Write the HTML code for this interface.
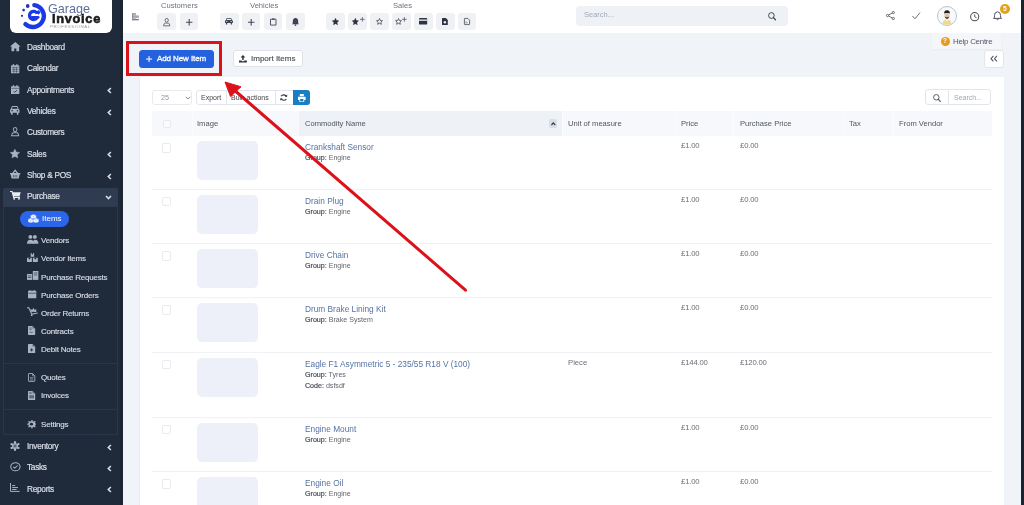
<!DOCTYPE html><html><head><meta charset="utf-8"><style>
*{margin:0;padding:0;box-sizing:border-box}
html,body{width:1024px;height:505px;overflow:hidden;background:#f0f3f8;font-family:"Liberation Sans",sans-serif}
.t{position:absolute;line-height:1;white-space:nowrap;will-change:transform}
.r{position:absolute}
svg{position:absolute;overflow:visible}
</style></head><body>
<div class="r" style="left:0px;top:0px;width:123px;height:505px;background:#1f2a3b"></div>
<div class="r" style="left:120px;top:0px;width:3px;height:505px;background:#1b2534"></div>
<div class="r" style="left:10px;top:-6px;width:102px;height:39.3px;background:#fff;border-radius:6px"></div>
<svg style="left:0;top:0" width="60" height="36" viewBox="0 0 60 36">
<path d="M34.33 5.11 A11.0 11.0 0 1 1 25.44 24.17" fill="none" stroke="#1c3ae4" stroke-width="4.4" stroke-linecap="round"/>
<path d="M37.32 13.67 A4.1 4.1 0 1 0 37.15 17.45" fill="none" stroke="#1c3ae4" stroke-width="3.3" stroke-linecap="butt"/><path d="M37.32 13.67 L39.5 11.2" stroke="#1c3ae4" stroke-width="3.3"/>
<path d="M32 17.2 L38.2 17.2" stroke="#1c3ae4" stroke-width="2.6" stroke-linecap="round"/>
<circle cx="27.7" cy="6.0" r="1.9" fill="#2a34b0"/>
<circle cx="23.6" cy="10.1" r="1.4" fill="#2a34b0"/>
<circle cx="22.0" cy="15.8" r="1.15" fill="#2a34b0"/>
</svg>
<div class="t" style="left:48.2px;top:2.52px;font-size:12.6px;color:#5d6d9c;font-weight:400;">Garage</div>
<div class="t" style="left:51.6px;top:12.50px;font-size:12.8px;color:#1a1a1a;font-weight:700;letter-spacing:0.7px;-webkit-text-stroke:0.6px #1a1a1a">Invoice</div>
<div class="t" style="left:50px;top:24.78px;font-size:4.4px;color:#9a9a9a;font-weight:400;letter-spacing:0.55px">PROFESSIONAL</div>
<div class="t" style="left:26.7px;top:42.92px;font-size:8.3px;color:#d8dde5;font-weight:400;-webkit-text-stroke:0.22px #d8dde5;letter-spacing:-0.3px">Dashboard</div>
<div class="t" style="left:26.7px;top:64.32px;font-size:8.3px;color:#d8dde5;font-weight:400;-webkit-text-stroke:0.22px #d8dde5;letter-spacing:-0.3px">Calendar</div>
<div class="t" style="left:26.7px;top:85.62px;font-size:8.3px;color:#d8dde5;font-weight:400;-webkit-text-stroke:0.22px #d8dde5;letter-spacing:-0.3px">Appointments</div>
<svg style="left:107.3px;top:87.3px" width="5" height="7" viewBox="0 0 5 7"><path d="M3.9 1 L1.3 3.5 L3.9 6" fill="none" stroke="#d8dde5" stroke-width="1.6"/></svg>
<div class="t" style="left:26.7px;top:106.92px;font-size:8.3px;color:#d8dde5;font-weight:400;-webkit-text-stroke:0.22px #d8dde5;letter-spacing:-0.3px">Vehicles</div>
<svg style="left:107.3px;top:108.6px" width="5" height="7" viewBox="0 0 5 7"><path d="M3.9 1 L1.3 3.5 L3.9 6" fill="none" stroke="#d8dde5" stroke-width="1.6"/></svg>
<div class="t" style="left:26.7px;top:128.22px;font-size:8.3px;color:#d8dde5;font-weight:400;-webkit-text-stroke:0.22px #d8dde5;letter-spacing:-0.3px">Customers</div>
<div class="t" style="left:26.7px;top:149.52px;font-size:8.3px;color:#d8dde5;font-weight:400;-webkit-text-stroke:0.22px #d8dde5;letter-spacing:-0.3px">Sales</div>
<svg style="left:107.3px;top:151.2px" width="5" height="7" viewBox="0 0 5 7"><path d="M3.9 1 L1.3 3.5 L3.9 6" fill="none" stroke="#d8dde5" stroke-width="1.6"/></svg>
<div class="t" style="left:26.7px;top:170.82px;font-size:8.3px;color:#d8dde5;font-weight:400;-webkit-text-stroke:0.22px #d8dde5;letter-spacing:-0.3px">Shop &amp; POS</div>
<svg style="left:107.3px;top:172.5px" width="5" height="7" viewBox="0 0 5 7"><path d="M3.9 1 L1.3 3.5 L3.9 6" fill="none" stroke="#d8dde5" stroke-width="1.6"/></svg>
<div class="r" style="left:3.3px;top:187.5px;width:115.2px;height:19.099999999999994px;background:#2e3b50;border-radius:2px 2px 0 0"></div>
<div class="t" style="left:26.7px;top:192.32px;font-size:8.3px;color:#d8dde5;font-weight:400;-webkit-text-stroke:0.22px #d8dde5;letter-spacing:-0.3px">Purchase</div>
<svg style="left:105.3px;top:194.5px" width="7" height="5" viewBox="0 0 7 5"><path d="M1 1 L3.5 3.5 L6 1" fill="none" stroke="#d8dde5" stroke-width="1.6"/></svg>
<div class="r" style="left:3.3px;top:206.4px;width:115.2px;height:229.1px;border:1px solid #2a3548;border-top:none"></div>
<div class="r" style="left:3.3px;top:362.5px;width:115.2px;height:1.0px;background:#2a3548"></div>
<div class="r" style="left:3.3px;top:409px;width:115.2px;height:1px;background:#2a3548"></div>
<div class="r" style="left:19.6px;top:210.9px;width:48.99999999999999px;height:16.099999999999994px;background:#2b66ea;border-radius:8.5px"></div>
<div class="t" style="left:41.9px;top:215.06px;font-size:8px;color:#fff;font-weight:400;">Items</div>
<div class="t" style="left:41px;top:236.96px;font-size:8px;color:#d8dde5;font-weight:400;letter-spacing:-0.2px;-webkit-text-stroke:0.15px #d8dde5">Vendors</div>
<div class="t" style="left:41px;top:255.36px;font-size:8px;color:#d8dde5;font-weight:400;letter-spacing:-0.2px;-webkit-text-stroke:0.15px #d8dde5">Vendor Items</div>
<div class="t" style="left:41px;top:273.66px;font-size:8px;color:#d8dde5;font-weight:400;letter-spacing:-0.2px;-webkit-text-stroke:0.15px #d8dde5">Purchase Requests</div>
<div class="t" style="left:41px;top:291.86px;font-size:8px;color:#d8dde5;font-weight:400;letter-spacing:-0.2px;-webkit-text-stroke:0.15px #d8dde5">Purchase Orders</div>
<div class="t" style="left:41px;top:309.96px;font-size:8px;color:#d8dde5;font-weight:400;letter-spacing:-0.2px;-webkit-text-stroke:0.15px #d8dde5">Order Returns</div>
<div class="t" style="left:41px;top:327.96px;font-size:8px;color:#d8dde5;font-weight:400;letter-spacing:-0.2px;-webkit-text-stroke:0.15px #d8dde5">Contracts</div>
<div class="t" style="left:41px;top:345.76px;font-size:8px;color:#d8dde5;font-weight:400;letter-spacing:-0.2px;-webkit-text-stroke:0.15px #d8dde5">Debit Notes</div>
<div class="t" style="left:41px;top:374.36px;font-size:8px;color:#d8dde5;font-weight:400;letter-spacing:-0.2px;-webkit-text-stroke:0.15px #d8dde5">Quotes</div>
<div class="t" style="left:41px;top:392.16px;font-size:8px;color:#d8dde5;font-weight:400;letter-spacing:-0.2px;-webkit-text-stroke:0.15px #d8dde5">Invoices</div>
<div class="t" style="left:41px;top:420.96px;font-size:8px;color:#d8dde5;font-weight:400;letter-spacing:-0.2px;-webkit-text-stroke:0.15px #d8dde5">Settings</div>
<div class="t" style="left:26.7px;top:441.92px;font-size:8.3px;color:#d8dde5;font-weight:400;-webkit-text-stroke:0.22px #d8dde5;letter-spacing:-0.3px">Inventory</div>
<svg style="left:107.3px;top:443.6px" width="5" height="7" viewBox="0 0 5 7"><path d="M3.9 1 L1.3 3.5 L3.9 6" fill="none" stroke="#d8dde5" stroke-width="1.6"/></svg>
<div class="t" style="left:26.7px;top:463.02px;font-size:8.3px;color:#d8dde5;font-weight:400;-webkit-text-stroke:0.22px #d8dde5;letter-spacing:-0.3px">Tasks</div>
<svg style="left:107.3px;top:464.7px" width="5" height="7" viewBox="0 0 5 7"><path d="M3.9 1 L1.3 3.5 L3.9 6" fill="none" stroke="#d8dde5" stroke-width="1.6"/></svg>
<div class="t" style="left:26.7px;top:484.52px;font-size:8.3px;color:#d8dde5;font-weight:400;-webkit-text-stroke:0.22px #d8dde5;letter-spacing:-0.3px">Reports</div>
<svg style="left:107.3px;top:486.2px" width="5" height="7" viewBox="0 0 5 7"><path d="M3.9 1 L1.3 3.5 L3.9 6" fill="none" stroke="#d8dde5" stroke-width="1.6"/></svg>
<svg style="left:9.8px;top:42.2px;color:#aab2bf" width="10.60" height="9.30" viewBox="0 0 10 9" preserveAspectRatio="none"><path d="M5 0 L10 4.4 L8.6 4.4 L8.6 9 L6 9 L6 6.2 L4 6.2 L4 9 L1.4 9 L1.4 4.4 L0 4.4 Z" fill="currentColor"/></svg>
<svg style="left:11px;top:63.7px;color:#aab2bf" width="8.30" height="9.20" viewBox="0 0 8 9" preserveAspectRatio="none"><path d="M0 2 Q0 1.2 0.8 1.2 L1.8 1.2 L1.8 0 L2.8 0 L2.8 1.2 L5.2 1.2 L5.2 0 L6.2 0 L6.2 1.2 L7.2 1.2 Q8 1.2 8 2 L8 9 L0 9 Z" fill="currentColor"/><path d="M0.8 3.3 H7.2 M0.8 5.2 H7.2 M0.8 7.1 H7.2 M2.7 3.3 V8.6 M5.3 3.3 V8.6" stroke="#1f2a3b" stroke-width="0.45"/></svg>
<svg style="left:11px;top:84.8px;color:#aab2bf" width="8.30" height="9.10" viewBox="0 0 8 9" preserveAspectRatio="none"><path d="M0 2 Q0 1.2 0.8 1.2 L1.8 1.2 L1.8 0 L2.8 0 L2.8 1.2 L5.2 1.2 L5.2 0 L6.2 0 L6.2 1.2 L7.2 1.2 Q8 1.2 8 2 L8 9 L0 9 Z" fill="currentColor"/><path d="M0.4 3.3 H7.6" stroke="#1f2a3b" stroke-width="0.5"/><path d="M2.4 6.2 L3.6 7.3 L5.8 5" fill="none" stroke="#1f2a3b" stroke-width="0.8"/></svg>
<svg style="left:10.2px;top:106.2px;color:#aab2bf" width="9.50" height="8.70" viewBox="0 0 10 9" preserveAspectRatio="none"><path d="M1.8 0.6 Q2 0 2.6 0 L7.4 0 Q8 0 8.2 0.6 L9 3 Q10 3.3 10 4.3 L10 7 L8.8 7 L8.8 9 L7.2 9 L7.2 7 L2.8 7 L2.8 9 L1.2 9 L1.2 7 L0 7 L0 4.3 Q0 3.3 1 3 Z" fill="currentColor"/><path d="M2.6 1 L7.4 1 L8 2.9 L2 2.9 Z" fill="#1f2a3b"/><circle cx="2.2" cy="4.9" r="0.8" fill="#1f2a3b"/><circle cx="7.8" cy="4.9" r="0.8" fill="#1f2a3b"/></svg>
<svg style="left:11px;top:127.2px;color:#aab2bf" width="8.30" height="9.10" viewBox="0 0 9 9" preserveAspectRatio="none"><circle cx="4.5" cy="2.5" r="2" fill="none" stroke="currentColor" stroke-width="1"/><path d="M0.6 8.6 L1.4 6.4 Q1.8 5.6 2.8 5.6 L6.2 5.6 Q7.2 5.6 7.6 6.4 L8.4 8.6 Z" fill="none" stroke="currentColor" stroke-width="1" stroke-linejoin="round"/></svg>
<svg style="left:10.2px;top:148.6px;color:#aab2bf" width="9.80" height="9.10" viewBox="0 0 10 9.5" preserveAspectRatio="none"><path d="M5 0 L6.5 3.2 L10 3.6 L7.4 6 L8.1 9.5 L5 7.8 L1.9 9.5 L2.6 6 L0 3.6 L3.5 3.2 Z" fill="currentColor" stroke="currentColor" stroke-width="0.3" stroke-linejoin="round"/></svg>
<svg style="left:10.2px;top:170.3px;color:#aab2bf" width="10.30" height="8.40" viewBox="0 0 10 8.5" preserveAspectRatio="none"><path d="M2.6 3.4 L5 0.3 L7.4 3.4" fill="none" stroke="currentColor" stroke-width="1.2"/><path d="M0 3 H10 V4.4 H9.4 L8.4 8.5 H1.6 L0.6 4.4 H0 Z" fill="currentColor"/><path d="M3.4 5.1 V7.4 M5 5.1 V7.4 M6.6 5.1 V7.4" stroke="#1f2a3b" stroke-width="0.55"/></svg>
<svg style="left:9.8px;top:191.4px;color:#e8ecf2" width="10.70" height="8.70" viewBox="0 0 10 9.4" preserveAspectRatio="none"><path d="M2.2 1.3 H10 L9 5.6 H3.2 Z" fill="currentColor"/><path d="M0 0.55 H1.9 L3.5 6.9 H9.4" fill="none" stroke="currentColor" stroke-width="1.1"/><circle cx="3.9" cy="8.5" r="0.95" fill="currentColor"/><circle cx="8.4" cy="8.5" r="0.95" fill="currentColor"/></svg>
<svg style="left:27.7px;top:213.7px;color:#ffffff" width="10.80" height="9.00" viewBox="0 0 9.4 9" preserveAspectRatio="none"><path d="M4.7 0.2 L7.2 1.3 L7.2 4.2 L4.7 5.3 L2.2 4.2 L2.2 1.3 Z" fill="currentColor" stroke="#2b66ea" stroke-width="0.4" stroke-linejoin="round"/><path d="M2.5 4 L5 5.1 L5 8 L2.5 9.1 L0 8 L0 5.1 Z" fill="currentColor" stroke="#2b66ea" stroke-width="0.4" stroke-linejoin="round"/><path d="M6.9 4 L9.4 5.1 L9.4 8 L6.9 9.1 L4.4 8 L4.4 5.1 Z" fill="currentColor" stroke="#2b66ea" stroke-width="0.4" stroke-linejoin="round"/><path d="M2.2 1.3 L4.7 2.4 L7.2 1.3 M4.7 2.4 V5.3 M0 5.1 L2.5 6.2 L5 5.1 M2.5 6.2 V9.1 M4.4 5.1 L6.9 6.2 L9.4 5.1 M6.9 6.2 V9.1" fill="none" stroke="#7d8fb8" stroke-width="0.35"/></svg>
<svg style="left:26.5px;top:235.2px;color:#aab2bf" width="11.40" height="8.80" viewBox="0 0 11 9" preserveAspectRatio="none"><circle cx="3.3" cy="2" r="1.9" fill="currentColor"/><circle cx="7.6" cy="2" r="1.9" fill="currentColor"/><path d="M0 9 Q0 4.8 3.3 4.8 Q6.6 4.8 6.6 9 Z" fill="currentColor"/><path d="M5.6 9 Q5.6 4.8 7.8 4.8 Q11 4.8 11 9 Z" fill="currentColor"/></svg>
<svg style="left:26.5px;top:253px;color:#aab2bf" width="10.80" height="9.00" viewBox="0 0 10.6 9" preserveAspectRatio="none"><path d="M3.6 0 H7 V3.8 H3.6 Z" fill="currentColor"/><path d="M0 4.8 H4.8 V9 H0 Z M5.8 4.8 H10.6 V9 H5.8 Z" fill="currentColor"/><path d="M1.6 4.8 V6.3 H3.2 V4.8 M7.4 4.8 V6.3 H9 V4.8 M4.6 0 V1.5 H6 V0" fill="#1f2a3b"/></svg>
<svg style="left:26.5px;top:271.4px;color:#aab2bf" width="11.40" height="8.90" viewBox="0 0 11 9" preserveAspectRatio="none"><path d="M0 3 H5 V9 H0 Z" fill="currentColor"/><path d="M5.6 0 H11 V9 H5.6 Z" fill="currentColor"/><path d="M0.8 5 H4.2 M0.8 6.6 H4.2 M6.6 2 H10 M6.6 4 H10" stroke="#1f2a3b" stroke-width="0.6"/></svg>
<svg style="left:27.7px;top:289.8px;color:#aab2bf" width="8.30" height="8.20" viewBox="0 0 8 8" preserveAspectRatio="none"><path d="M0 1.4 Q0 0.8 0.7 0.8 L7.3 0.8 Q8 0.8 8 1.4 L8 8 L0 8 Z" fill="currentColor"/><path d="M2 0 V1.8 M6 0 V1.8" stroke="currentColor" stroke-width="0.9"/><path d="M0.4 3.2 H7.6" stroke="#1f2a3b" stroke-width="0.6"/></svg>
<svg style="left:26.5px;top:307px;color:#aab2bf" width="10.80" height="9.00" viewBox="0 0 10.6 9" preserveAspectRatio="none"><path d="M0 0.4 L2 0 L5 6.6 L10.5 5.6 L10.6 6.6 L4.4 7.8 L1.4 1.2 L0.2 1.4 Z" fill="currentColor"/><circle cx="4.6" cy="8.2" r="0.9" fill="currentColor"/><path d="M3.6 4.8 L3.4 1.8 L5 3 L6.4 0.8 L7.4 3 L9 2 L9.2 5 Z" fill="currentColor"/></svg>
<svg style="left:27.7px;top:325.6px;color:#aab2bf" width="7.20" height="8.90" viewBox="0 0 7.2 9" preserveAspectRatio="none"><path d="M0 0.6 Q0 0 0.6 0 L4.6 0 L7.2 2.6 L7.2 8.4 Q7.2 9 6.6 9 L0.6 9 Q0 9 0 8.4 Z" fill="currentColor"/><path d="M4.6 0 V2.6 H7.2" fill="#1f2a3b" opacity="0.5"/><path d="M1.6 6.6 Q2.4 5.2 3 6.4 Q3.6 7.2 4.6 6.2" fill="none" stroke="#1f2a3b" stroke-width="0.6"/><path d="M1.4 2 H3.6 M1.4 3.4 H3.6" stroke="#1f2a3b" stroke-width="0.5"/></svg>
<svg style="left:27.7px;top:344px;color:#aab2bf" width="7.20" height="9.00" viewBox="0 0 7.2 9" preserveAspectRatio="none"><path d="M0 0.6 Q0 0 0.6 0 L4.6 0 L7.2 2.6 L7.2 8.4 Q7.2 9 6.6 9 L0.6 9 Q0 9 0 8.4 Z" fill="currentColor"/><path d="M4.6 0 V2.6 H7.2" fill="#1f2a3b" opacity="0.5"/><path d="M3.6 4.4 V7.4 M2.1 5.9 H5.1" stroke="#1f2a3b" stroke-width="0.9"/></svg>
<svg style="left:27.7px;top:372.6px;color:#aab2bf" width="7.30" height="8.90" viewBox="0 0 7.3 9" preserveAspectRatio="none"><path d="M0.5 1 Q0.5 0.5 1 0.5 L4.5 0.5 L6.8 2.8 L6.8 8 Q6.8 8.5 6.3 8.5 L1 8.5 Q0.5 8.5 0.5 8 Z" fill="none" stroke="currentColor" stroke-width="0.9"/><path d="M4.5 0.5 V2.8 H6.8" fill="none" stroke="currentColor" stroke-width="0.7"/><path d="M1.9 4.6 H5.3 M1.9 5.9 H5.3 M1.9 7.2 H5.3" stroke="currentColor" stroke-width="0.6"/></svg>
<svg style="left:27.7px;top:390.9px;color:#aab2bf" width="7.20" height="9.00" viewBox="0 0 7.2 9" preserveAspectRatio="none"><path d="M0 0.6 Q0 0 0.6 0 L4.6 0 L7.2 2.6 L7.2 8.4 Q7.2 9 6.6 9 L0.6 9 Q0 9 0 8.4 Z" fill="currentColor"/><path d="M4.6 0 V2.6 H7.2" fill="#1f2a3b" opacity="0.5"/><path d="M1.2 4.2 H6 V7.4 H1.2 Z" fill="#1f2a3b" opacity="0.55"/><path d="M1.2 1.4 H3.6 M1.2 2.6 H3.6" stroke="#1f2a3b" stroke-width="0.5"/></svg>
<svg style="left:27.1px;top:420px;color:#aab2bf" width="8.90" height="8.40" viewBox="0 0 9 10" preserveAspectRatio="none"><path d="M4.5 0 L5.5 0 L5.8 1.4 L6.9 1.9 L8.1 1.1 L8.9 1.9 L8.1 3.1 L8.6 4.2 L9 4.5 L9 5.5 L8.6 5.8 L8.1 6.9 L8.9 8.1 L8.1 8.9 L6.9 8.1 L5.8 8.6 L5.5 10 L4.5 10 L4.2 8.6 L3.1 8.1 L1.9 8.9 L1.1 8.1 L1.9 6.9 L1.4 5.8 L0 5.5 L0 4.5 L1.4 4.2 L1.9 3.1 L1.1 1.9 L1.9 1.1 L3.1 1.9 L4.2 1.4 Z" fill="currentColor"/><circle cx="4.5" cy="5" r="1.6" fill="#1f2a3b"/></svg>
<svg style="left:10.9px;top:441.7px;color:#aab2bf" width="8.00" height="8.10" viewBox="0 0 8.4 9" preserveAspectRatio="none"><path d="M4.2 0.2 V8.8 M0.5 2.35 L7.9 6.65 M0.5 6.65 L7.9 2.35" stroke="currentColor" stroke-width="2.4" stroke-linecap="round"/><circle cx="4.2" cy="4.5" r="3.2" fill="currentColor"/><path d="M4.2 2.2 V6.8 M2.2 3.35 L6.2 5.65 M2.2 5.65 L6.2 3.35" stroke="#1f2a3b" stroke-width="0.5"/></svg>
<svg style="left:9.5px;top:461.8px;color:#aab2bf" width="10.80" height="9.50" viewBox="0 0 10 10" preserveAspectRatio="none"><circle cx="5" cy="5" r="4.3" fill="none" stroke="currentColor" stroke-width="1"/><path d="M3 5.1 L4.4 6.4 L7 3.7" fill="none" stroke="currentColor" stroke-width="1"/></svg>
<svg style="left:10.1px;top:482.6px;color:#aab2bf" width="9.60" height="8.40" viewBox="0 0 9.6 8.5" preserveAspectRatio="none"><path d="M0.5 0 V8.5 H9.6" fill="none" stroke="currentColor" stroke-width="1"/><path d="M2.2 2.6 H5.2 M2.2 4.6 H8 M2.2 6.6 H6.6" stroke="currentColor" stroke-width="1"/></svg>
<div class="r" style="left:1021px;top:0px;width:3px;height:505px;background:#1b2230"></div>
<div class="r" style="left:123px;top:0px;width:898px;height:32.5px;background:#fff"></div>
<div class="t" style="left:160.5px;top:2.11px;font-size:7.6px;color:#6b7280;font-weight:400;">Customers</div>
<div class="t" style="left:249.5px;top:2.11px;font-size:7.6px;color:#6b7280;font-weight:400;">Vehicles</div>
<div class="t" style="left:393.4px;top:2.11px;font-size:7.6px;color:#6b7280;font-weight:400;">Sales</div>
<div class="r" style="left:157px;top:13px;width:18.5px;height:17px;background:#f0f1f5;border-radius:3px"></div>
<div class="r" style="left:179.5px;top:13px;width:18.5px;height:17px;background:#f0f1f5;border-radius:3px"></div>
<div class="r" style="left:220px;top:13px;width:18.5px;height:17px;background:#f0f1f5;border-radius:3px"></div>
<div class="r" style="left:241.7px;top:13px;width:18.5px;height:17px;background:#f0f1f5;border-radius:3px"></div>
<div class="r" style="left:263.5px;top:13px;width:18.5px;height:17px;background:#f0f1f5;border-radius:3px"></div>
<div class="r" style="left:286px;top:13px;width:18.5px;height:17px;background:#f0f1f5;border-radius:3px"></div>
<div class="r" style="left:326px;top:13px;width:18.5px;height:17px;background:#f0f1f5;border-radius:3px"></div>
<div class="r" style="left:348px;top:13px;width:18.5px;height:17px;background:#f0f1f5;border-radius:3px"></div>
<div class="r" style="left:370px;top:13px;width:18.5px;height:17px;background:#f0f1f5;border-radius:3px"></div>
<div class="r" style="left:392px;top:13px;width:18.5px;height:17px;background:#f0f1f5;border-radius:3px"></div>
<div class="r" style="left:414px;top:13px;width:18.5px;height:17px;background:#f0f1f5;border-radius:3px"></div>
<div class="r" style="left:436px;top:13px;width:18.5px;height:17px;background:#f0f1f5;border-radius:3px"></div>
<div class="r" style="left:457.5px;top:13px;width:18.5px;height:17px;background:#f0f1f5;border-radius:3px"></div>
<div class="r" style="left:575.5px;top:6px;width:212.10000000000002px;height:20px;background:#eef1f6;border-radius:4px"></div>
<div class="t" style="left:583.8px;top:11.42px;font-size:7.5px;color:#a3aab8;font-weight:400;">Search...</div>
<svg style="left:132.1px;top:12.7px;color:#aab2bf" width="6.90" height="7.30" viewBox="0 0 6.9 7.3" preserveAspectRatio="none"><rect x="0" y="0" width="3.9" height="2.6" fill="#a9adb4"/><rect x="0" y="2.4" width="6.9" height="2.5" fill="#a4a8b0"/><rect x="0" y="4.9" width="4.4" height="1" fill="#b8bcc2"/><rect x="0" y="6.1" width="6.9" height="1.2" fill="#6f747c"/><rect x="0" y="0" width="0.9" height="7.3" fill="#8a8f97"/></svg>
<svg style="left:163.2px;top:17.8px;color:#555b66" width="7.40" height="8.20" viewBox="0 0 9 9" preserveAspectRatio="none"><circle cx="4.5" cy="2.5" r="2" fill="none" stroke="currentColor" stroke-width="1"/><path d="M0.6 8.6 L1.4 6.4 Q1.8 5.6 2.8 5.6 L6.2 5.6 Q7.2 5.6 7.6 6.4 L8.4 8.6 Z" fill="none" stroke="currentColor" stroke-width="1" stroke-linejoin="round"/></svg>
<svg style="left:185.8px;top:18.5px;color:#444a55" width="6.40" height="6.40" viewBox="0 0 6.4 6.4" preserveAspectRatio="none"><path d="M3.2 0 V6.4 M0 3.2 H6.4" stroke="currentColor" stroke-width="1.1"/></svg>
<svg style="left:225.2px;top:18.3px;color:#3b4250" width="7.90" height="6.50" viewBox="0 0 10 9" preserveAspectRatio="none"><path d="M1.8 0.6 Q2 0 2.6 0 L7.4 0 Q8 0 8.2 0.6 L9 3 Q10 3.3 10 4.3 L10 7 L8.8 7 L8.8 9 L7.2 9 L7.2 7 L2.8 7 L2.8 9 L1.2 9 L1.2 7 L0 7 L0 4.3 Q0 3.3 1 3 Z" fill="currentColor"/><path d="M2.6 1 L7.4 1 L8 2.9 L2 2.9 Z" fill="#f0f1f5"/><circle cx="2.2" cy="4.9" r="0.8" fill="#f0f1f5"/><circle cx="7.8" cy="4.9" r="0.8" fill="#f0f1f5"/></svg>
<svg style="left:248px;top:18.6px;color:#444a55" width="6.40" height="6.40" viewBox="0 0 6.4 6.4" preserveAspectRatio="none"><path d="M3.2 0 V6.4 M0 3.2 H6.4" stroke="currentColor" stroke-width="1.1"/></svg>
<svg style="left:269.7px;top:18.3px;color:#444a55" width="6.50" height="7.50" viewBox="0 0 6.5 9" preserveAspectRatio="none"><path d="M0.5 1.5 H6 V8.5 H0.5 Z" fill="none" stroke="currentColor" stroke-width="1" rx="1"/><path d="M2 0.5 H4.5 V2 H2 Z" fill="currentColor"/></svg>
<svg style="left:291.5px;top:17.9px;color:#3b4250" width="7.00" height="7.90" viewBox="0 0 7 8.5" preserveAspectRatio="none"><path d="M3.5 0 Q6.2 0.4 6.2 3.6 L6.2 5.6 L7 6.6 L0 6.6 L0.8 5.6 L0.8 3.6 Q0.8 0.4 3.5 0 Z" fill="currentColor"/><circle cx="3.5" cy="7.6" r="0.9" fill="currentColor"/></svg>
<svg style="left:332.2px;top:18.2px;color:#2d3340" width="7.00" height="7.00" viewBox="0 0 10 9.5" preserveAspectRatio="none"><path d="M5 0 L6.5 3.2 L10 3.6 L7.4 6 L8.1 9.5 L5 7.8 L1.9 9.5 L2.6 6 L0 3.6 L3.5 3.2 Z" fill="currentColor" stroke="currentColor" stroke-width="0.3" stroke-linejoin="round"/></svg>
<svg style="left:352px;top:18.2px;color:#2d3340" width="6.70" height="7.00" viewBox="0 0 10 9.5" preserveAspectRatio="none"><path d="M5 0 L6.5 3.2 L10 3.6 L7.4 6 L8.1 9.5 L5 7.8 L1.9 9.5 L2.6 6 L0 3.6 L3.5 3.2 Z" fill="currentColor" stroke="currentColor" stroke-width="0.3" stroke-linejoin="round"/></svg>
<svg style="left:360.3px;top:17.4px;color:#555b66" width="4.70" height="4.70" viewBox="0 0 6.4 6.4" preserveAspectRatio="none"><path d="M3.2 0 V6.4 M0 3.2 H6.4" stroke="currentColor" stroke-width="1.1"/></svg>
<svg style="left:376px;top:18.2px;color:#2d3340" width="7.00" height="7.00" viewBox="0 0 10 10" preserveAspectRatio="none"><path d="M5 0.8 L6.2 3.6 L9.2 3.9 L7 6 L7.6 9 L5 7.5 L2.4 9 L3 6 L0.8 3.9 L3.8 3.6 Z" fill="none" stroke="currentColor" stroke-width="1" stroke-linejoin="round"/></svg>
<svg style="left:394.5px;top:18.2px;color:#2d3340" width="7.00" height="7.00" viewBox="0 0 10 10" preserveAspectRatio="none"><path d="M5 0.8 L6.2 3.6 L9.2 3.9 L7 6 L7.6 9 L5 7.5 L2.4 9 L3 6 L0.8 3.9 L3.8 3.6 Z" fill="none" stroke="currentColor" stroke-width="1" stroke-linejoin="round"/></svg>
<svg style="left:402.3px;top:17.4px;color:#555b66" width="4.70" height="4.70" viewBox="0 0 6.4 6.4" preserveAspectRatio="none"><path d="M3.2 0 V6.4 M0 3.2 H6.4" stroke="currentColor" stroke-width="1.1"/></svg>
<svg style="left:419.1px;top:18.2px;color:#2d3340" width="8.20" height="6.60" viewBox="0 0 8.2 6.6" preserveAspectRatio="none"><rect x="0" y="0" width="8.2" height="6.6" rx="0.9" fill="currentColor"/><rect x="0" y="1.5" width="8.2" height="1.3" fill="#eef0f4"/></svg>
<svg style="left:442.2px;top:18.2px;color:#2d3340" width="5.80" height="7.00" viewBox="0 0 5.8 7" preserveAspectRatio="none"><path d="M0 0.5 Q0 0 0.5 0 L3.8 0 L5.8 2 L5.8 6.5 Q5.8 7 5.3 7 L0.5 7 Q0 7 0 6.5 Z" fill="currentColor"/><circle cx="2.9" cy="4.3" r="1.2" fill="#eef0f4"/></svg>
<svg style="left:464px;top:18.2px;color:#444a55" width="6.00" height="7.00" viewBox="0 0 6 7" preserveAspectRatio="none"><path d="M0.4 0.8 Q0.4 0.4 0.8 0.4 L3.8 0.4 L5.6 2.2 L5.6 6.2 Q5.6 6.6 5.2 6.6 L0.8 6.6 Q0.4 6.6 0.4 6.2 Z" fill="none" stroke="currentColor" stroke-width="0.8"/><path d="M2 3.4 V5.4 M3 4 V5.4" stroke="currentColor" stroke-width="0.5"/></svg>
<svg style="left:768px;top:11.7px;color:#333a45" width="8.00" height="8.30" viewBox="0 0 8 8" preserveAspectRatio="none"><circle cx="3.4" cy="3.4" r="2.8" fill="none" stroke="currentColor" stroke-width="0.9"/><path d="M5.4 5.4 L7.5 7.5" stroke="currentColor" stroke-width="1.1" stroke-linecap="round"/></svg>
<svg style="left:885.8px;top:11.3px;color:#555b66" width="9.00" height="9.00" viewBox="0 0 9 9" preserveAspectRatio="none"><circle cx="7.3" cy="1.5" r="1.1" fill="none" stroke="currentColor" stroke-width="0.9"/><circle cx="1.5" cy="4.5" r="1.1" fill="none" stroke="currentColor" stroke-width="0.9"/><circle cx="7.3" cy="7.5" r="1.1" fill="none" stroke="currentColor" stroke-width="0.9"/><path d="M2.5 4 L6.3 2 M2.5 5 L6.3 7" stroke="currentColor" stroke-width="0.9"/></svg>
<svg style="left:912px;top:12px;color:#6a707a" width="8.40" height="7.50" viewBox="0 0 8.4 7.5" preserveAspectRatio="none"><path d="M0.5 4 L3 6.8 L8 0.6" fill="none" stroke="currentColor" stroke-width="1"/></svg>
<div class="r" style="left:937px;top:6px;width:20px;height:20px;border-radius:50%;border:1.2px solid #b9c3cd;background:#f7fafc;overflow:hidden"></div>
<svg style="left:937px;top:6px" width="20" height="20" viewBox="0 0 20 20">
<path d="M5.6 17.8 Q6 13.2 10 13.2 Q14 13.2 14.4 17.8 L13.8 18.6 L6.2 18.6 Z" fill="#efd98e"/>
<path d="M8.5 13.4 L10 15.5 L11.5 13.4 Z" fill="#fff"/>
<rect x="7.6" y="6.8" width="4.8" height="5.6" rx="2" fill="#e6c2a4"/>
<path d="M7.6 10.2 Q7.9 13 10 13.2 Q12.1 13 12.4 10.2 L11.6 11 L8.4 11 Z" fill="#5b5048"/>
<path d="M7.1 8.4 Q6.8 4.2 10 4.3 Q13.2 4.2 12.9 8.4 L12.3 7 L7.7 7 Z" fill="#222"/>
</svg>
<svg style="left:970.2px;top:11.6px;color:#444a55" width="9.40" height="9.40" viewBox="0 0 9.2 9.2" preserveAspectRatio="none"><circle cx="4.6" cy="4.6" r="4" fill="none" stroke="currentColor" stroke-width="1.0"/><path d="M4.6 2.3 V4.7 L6.4 5.6" fill="none" stroke="currentColor" stroke-width="0.9"/></svg>
<svg style="left:992.5px;top:11.3px;color:#444a55" width="9.10" height="9.00" viewBox="0 0 9.1 9" preserveAspectRatio="none"><path d="M4.55 0.8 Q7.6 1 7.6 4.4 L7.6 6.2 L8.6 7.4 L0.5 7.4 L1.5 6.2 L1.5 4.4 Q1.5 1 4.55 0.8 Z" fill="none" stroke="currentColor" stroke-width="0.95"/><path d="M3.6 8.3 Q4.55 9.2 5.5 8.3" fill="none" stroke="currentColor" stroke-width="0.9"/></svg>
<div class="r" style="left:1000px;top:4.3px;width:10px;height:10px;border-radius:50%;background:#e4a01d"></div>
<div class="t" style="left:1003.1px;top:5.52px;font-size:6.6px;color:#fff;font-weight:700;">5</div>
<div class="r" style="left:931.5px;top:33px;width:69.0px;height:16px;background:#f4f6fa;box-shadow:0 1px 2px rgba(0,0,0,0.03)"></div>
<div class="t" style="left:952.7px;top:37.57px;font-size:7.9px;color:#555b63;font-weight:400;letter-spacing:-0.25px">Help Centre</div>
<div class="r" style="left:940.7px;top:36.8px;width:9px;height:9px;border-radius:50%;background:#e49b1f"></div>
<div class="r" style="left:983.5px;top:50px;width:20.5px;height:17.5px;background:#fff;border:1px solid #e2e5ea;border-radius:3px"></div>
<div class="r" style="left:125.5px;top:40.7px;width:96.5px;height:35.7px;border:3px solid #dc121b"></div>
<div class="r" style="left:138.9px;top:49.8px;width:74.69999999999999px;height:17.900000000000006px;background:#2461de;border-radius:3.5px"></div>
<div class="t" style="left:156.9px;top:54.66px;font-size:8px;color:#fff;font-weight:400;-webkit-text-stroke:0.3px #fff;letter-spacing:-0.1px">Add New Item</div>
<div class="r" style="left:232.9px;top:49.6px;width:70.1px;height:17.4px;background:#fff;border:1px solid #dfe2e8;border-radius:3px"></div>
<div class="t" style="left:251.1px;top:55.26px;font-size:8px;color:#4a5059;font-weight:400;-webkit-text-stroke:0.15px #4a5059">Import Items</div>
<div class="t" style="left:943.2px;top:37.94px;font-size:6.5px;color:#fff;font-weight:700;">?</div>
<svg style="left:989.5px;top:55px;color:#4a5059" width="8.00" height="7.30" viewBox="0 0 8 7.2" preserveAspectRatio="none"><path d="M3.4 0.9 L1 3.6 L3.4 6.3 M6.9 0.9 L4.5 3.6 L6.9 6.3" fill="none" stroke="currentColor" stroke-width="1.0"/></svg>
<svg style="left:145.9px;top:55.9px;color:#ffffff" width="6.10" height="6.10" viewBox="0 0 6.1 6.1" preserveAspectRatio="none"><path d="M3.05 0 V6.1 M0 3.05 H6.1" stroke="currentColor" stroke-width="1.0"/></svg>
<svg style="left:239.1px;top:55px;color:#2d3340" width="7.90" height="7.40" viewBox="0 0 7.9 7.4" preserveAspectRatio="none"><path d="M3.95 0 L6.4 2.6 L4.7 2.6 L4.7 5 L3.2 5 L3.2 2.6 L1.5 2.6 Z" fill="currentColor"/><path d="M0 5.6 H2.6 Q2.8 6.4 3.95 6.4 Q5.1 6.4 5.3 5.6 H7.9 V7.4 H0 Z" fill="currentColor"/></svg>
<div class="r" style="left:140px;top:77px;width:864px;height:428px;background:#fff;box-shadow:-1px 0 0 #e8ebf1, 1px 0 0 #eef1f5"></div>
<div class="r" style="left:152.4px;top:90px;width:39.19999999999999px;height:15.200000000000003px;background:#fff;border:1px solid #e6e9ee;border-radius:3px"></div>
<div class="t" style="left:160.5px;top:93.75px;font-size:7.2px;color:#8e939a;font-weight:400;">25</div>
<svg style="left:185px;top:96px" width="6" height="4" viewBox="0 0 6 4"><path d="M0.8 0.9 L3 2.9 L5.2 0.9" fill="none" stroke="#6a6e75" stroke-width="0.8"/></svg>
<div class="r" style="left:195.6px;top:90px;width:114.6px;height:15.200000000000003px;background:#fff;border:1px solid #e2e6ec;border-radius:3px"></div>
<div class="r" style="left:226px;top:90px;width:1px;height:15.200000000000003px;background:#e2e6ec"></div>
<div class="r" style="left:275px;top:90px;width:1px;height:15.200000000000003px;background:#e2e6ec"></div>
<div class="t" style="left:200.5px;top:93.78px;font-size:7px;color:#444;font-weight:400;">Export</div>
<div class="t" style="left:231px;top:93.78px;font-size:7px;color:#444;font-weight:400;">Bulk actions</div>
<div class="r" style="left:292.6px;top:90px;width:17.599999999999966px;height:15.200000000000003px;background:#1a7ec4;border-radius:0 3px 3px 0"></div>
<div class="r" style="left:925px;top:89.3px;width:66px;height:15.700000000000003px;background:#fff;border:1px solid #e2e6ec;border-radius:3px"></div>
<div class="r" style="left:948.3px;top:89.3px;width:1.0px;height:15.700000000000003px;background:#e2e6ec"></div>
<div class="t" style="left:954.4px;top:93.78px;font-size:7px;color:#a0a7b4;font-weight:400;">Search...</div>
<div class="r" style="left:152.4px;top:111px;width:839.2px;height:24.5px;background:#f6f8fb"></div>
<div class="r" style="left:298.8px;top:111px;width:263.59999999999997px;height:24.5px;background:#eef1f6"></div>
<div class="r" style="left:191.6px;top:111px;width:1.0px;height:24.5px;background:#fbfcfd"></div>
<div class="r" style="left:562px;top:111px;width:1px;height:24.5px;background:#fbfcfd"></div>
<div class="r" style="left:675px;top:111px;width:1px;height:24.5px;background:#fbfcfd"></div>
<div class="r" style="left:733px;top:111px;width:1px;height:24.5px;background:#fbfcfd"></div>
<div class="r" style="left:842.7px;top:111px;width:1.0px;height:24.5px;background:#fbfcfd"></div>
<div class="r" style="left:892.6px;top:111px;width:1.0px;height:24.5px;background:#fbfcfd"></div>
<div class="r" style="left:162.6px;top:119.8px;width:8.800000000000011px;height:8.200000000000003px;background:#fbfcfd;border:1px solid #e6e9ee;border-radius:2px"></div>
<div class="t" style="left:197.2px;top:119.71px;font-size:7.6px;color:#50565f;font-weight:400;">Image</div>
<div class="t" style="left:304.6px;top:119.71px;font-size:7.6px;color:#50565f;font-weight:400;">Commodity Name</div>
<div class="r" style="left:548.5px;top:119.3px;width:8.799999999999955px;height:8.299999999999997px;background:#d8dde6;border-radius:2px"></div>
<div class="t" style="left:567.7px;top:119.71px;font-size:7.6px;color:#50565f;font-weight:400;">Unit of measure</div>
<div class="t" style="left:681px;top:119.71px;font-size:7.6px;color:#50565f;font-weight:400;">Price</div>
<div class="t" style="left:739.8px;top:119.71px;font-size:7.6px;color:#50565f;font-weight:400;">Purchase Price</div>
<div class="t" style="left:848.7px;top:119.71px;font-size:7.6px;color:#50565f;font-weight:400;">Tax</div>
<div class="t" style="left:899px;top:119.71px;font-size:7.6px;color:#50565f;font-weight:400;">From Vendor</div>
<svg style="left:280.2px;top:94px;color:#333a45" width="7.40" height="7.20" viewBox="0 0 7.2 7.2" preserveAspectRatio="none"><path d="M6.2 2.6 A3 3 0 0 0 1 2.2 M1 4.6 A3 3 0 0 0 6.2 5" fill="none" stroke="currentColor" stroke-width="1.1"/><path d="M4.8 2.8 L7 2.8 L7 0.6 Z M2.4 4.4 L0.2 4.4 L0.2 6.6 Z" fill="currentColor"/></svg>
<svg style="left:297.6px;top:93.6px;color:#ffffff" width="7.60" height="8.00" viewBox="0 0 7.6 8" preserveAspectRatio="none"><path d="M1.8 0 H5.8 V2.2 H1.8 Z" fill="currentColor"/><path d="M0 2.8 H7.6 V6 H6.2 V8 H1.4 V6 H0 Z" fill="currentColor"/><rect x="2.2" y="5" width="3.2" height="2.4" fill="#1a7ec4"/></svg>
<svg style="left:933px;top:93.5px;color:#444a55" width="7.80" height="7.80" viewBox="0 0 8 8" preserveAspectRatio="none"><circle cx="3.4" cy="3.4" r="2.8" fill="none" stroke="currentColor" stroke-width="0.9"/><path d="M5.4 5.4 L7.5 7.5" stroke="currentColor" stroke-width="1.1" stroke-linecap="round"/></svg>
<svg style="left:550.6px;top:121.5px;color:#333a45" width="4.60" height="3.50" viewBox="0 0 4.2 3" preserveAspectRatio="none"><path d="M0.4 2.6 L2.1 0.8 L3.8 2.6" fill="none" stroke="currentColor" stroke-width="1.1"/></svg>
<div class="r" style="left:161.7px;top:143.0px;width:9.0px;height:9.5px;background:#fff;border:1px solid #e9ebef;border-radius:2px"></div>
<div class="r" style="left:197px;top:141.0px;width:61px;height:39.0px;background:#edf0f9;border-radius:5px"></div>
<div class="t" style="left:304.8px;top:143.12px;font-size:8.3px;color:#5573a3;font-weight:400;">Crankshaft Sensor</div>
<div class="t" style="left:304.8px;top:155.17px;font-size:7.1px;color:#62666e;font-weight:400;"><span style="color:#4a4f57;-webkit-text-stroke:0.2px #4a4f57">Group:</span> Engine</div>
<div class="t" style="left:681px;top:142.10px;font-size:7.7px;color:#6b6e73;font-weight:400;letter-spacing:-0.15px">£1.00</div>
<div class="t" style="left:739.8px;top:142.10px;font-size:7.7px;color:#6b6e73;font-weight:400;letter-spacing:-0.15px">£0.00</div>
<div class="r" style="left:152.4px;top:189.0px;width:839.2px;height:1.0px;background:#f1f2f5"></div>
<div class="r" style="left:161.7px;top:196.8px;width:9.0px;height:9.5px;background:#fff;border:1px solid #e9ebef;border-radius:2px"></div>
<div class="r" style="left:197px;top:194.8px;width:61px;height:39.0px;background:#edf0f9;border-radius:5px"></div>
<div class="t" style="left:304.8px;top:196.92px;font-size:8.3px;color:#5573a3;font-weight:400;">Drain Plug</div>
<div class="t" style="left:304.8px;top:208.97px;font-size:7.1px;color:#62666e;font-weight:400;"><span style="color:#4a4f57;-webkit-text-stroke:0.2px #4a4f57">Group:</span> Engine</div>
<div class="t" style="left:681px;top:195.90px;font-size:7.7px;color:#6b6e73;font-weight:400;letter-spacing:-0.15px">£1.00</div>
<div class="t" style="left:739.8px;top:195.90px;font-size:7.7px;color:#6b6e73;font-weight:400;letter-spacing:-0.15px">£0.00</div>
<div class="r" style="left:152.4px;top:243.2px;width:839.2px;height:1.0px;background:#f1f2f5"></div>
<div class="r" style="left:161.7px;top:251.0px;width:9.0px;height:9.5px;background:#fff;border:1px solid #e9ebef;border-radius:2px"></div>
<div class="r" style="left:197px;top:249.0px;width:61px;height:39.0px;background:#edf0f9;border-radius:5px"></div>
<div class="t" style="left:304.8px;top:251.12px;font-size:8.3px;color:#5573a3;font-weight:400;">Drive Chain</div>
<div class="t" style="left:304.8px;top:263.17px;font-size:7.1px;color:#62666e;font-weight:400;"><span style="color:#4a4f57;-webkit-text-stroke:0.2px #4a4f57">Group:</span> Engine</div>
<div class="t" style="left:681px;top:250.10px;font-size:7.7px;color:#6b6e73;font-weight:400;letter-spacing:-0.15px">£1.00</div>
<div class="t" style="left:739.8px;top:250.10px;font-size:7.7px;color:#6b6e73;font-weight:400;letter-spacing:-0.15px">£0.00</div>
<div class="r" style="left:152.4px;top:297.3px;width:839.2px;height:1.0px;background:#f1f2f5"></div>
<div class="r" style="left:161.7px;top:305.1px;width:9.0px;height:9.5px;background:#fff;border:1px solid #e9ebef;border-radius:2px"></div>
<div class="r" style="left:197px;top:303.1px;width:61px;height:39.0px;background:#edf0f9;border-radius:5px"></div>
<div class="t" style="left:304.8px;top:305.22px;font-size:8.3px;color:#5573a3;font-weight:400;">Drum Brake Lining Kit</div>
<div class="t" style="left:304.8px;top:317.27px;font-size:7.1px;color:#62666e;font-weight:400;"><span style="color:#4a4f57;-webkit-text-stroke:0.2px #4a4f57">Group:</span> Brake System</div>
<div class="t" style="left:681px;top:304.20px;font-size:7.7px;color:#6b6e73;font-weight:400;letter-spacing:-0.15px">£1.00</div>
<div class="t" style="left:739.8px;top:304.20px;font-size:7.7px;color:#6b6e73;font-weight:400;letter-spacing:-0.15px">£0.00</div>
<div class="r" style="left:152.4px;top:352.0px;width:839.2px;height:1.0px;background:#f1f2f5"></div>
<div class="r" style="left:161.7px;top:359.8px;width:9.0px;height:9.5px;background:#fff;border:1px solid #e9ebef;border-radius:2px"></div>
<div class="r" style="left:197px;top:357.8px;width:61px;height:39.0px;background:#edf0f9;border-radius:5px"></div>
<div class="t" style="left:304.8px;top:359.92px;font-size:8.3px;color:#5573a3;font-weight:400;">Eagle F1 Asymmetric 5 - 235/55 R18 V (100)</div>
<div class="t" style="left:304.8px;top:371.97px;font-size:7.1px;color:#62666e;font-weight:400;"><span style="color:#4a4f57;-webkit-text-stroke:0.2px #4a4f57">Group:</span> Tyres</div>
<div class="t" style="left:304.8px;top:382.67px;font-size:7.1px;color:#62666e;font-weight:400;"><span style="color:#4a4f57;-webkit-text-stroke:0.2px #4a4f57">Code:</span> dsfsdf</div>
<div class="t" style="left:567.7px;top:358.90px;font-size:7.7px;color:#6b6e73;font-weight:400;">Piece</div>
<div class="t" style="left:681px;top:358.90px;font-size:7.7px;color:#6b6e73;font-weight:400;letter-spacing:-0.15px">£144.00</div>
<div class="t" style="left:739.8px;top:358.90px;font-size:7.7px;color:#6b6e73;font-weight:400;letter-spacing:-0.15px">£120.00</div>
<div class="r" style="left:152.4px;top:416.9px;width:839.2px;height:1.0px;background:#f1f2f5"></div>
<div class="r" style="left:161.7px;top:424.7px;width:9.0px;height:9.5px;background:#fff;border:1px solid #e9ebef;border-radius:2px"></div>
<div class="r" style="left:197px;top:422.7px;width:61px;height:39.0px;background:#edf0f9;border-radius:5px"></div>
<div class="t" style="left:304.8px;top:424.82px;font-size:8.3px;color:#5573a3;font-weight:400;">Engine Mount</div>
<div class="t" style="left:304.8px;top:436.87px;font-size:7.1px;color:#62666e;font-weight:400;"><span style="color:#4a4f57;-webkit-text-stroke:0.2px #4a4f57">Group:</span> Engine</div>
<div class="t" style="left:681px;top:423.80px;font-size:7.7px;color:#6b6e73;font-weight:400;letter-spacing:-0.15px">£1.00</div>
<div class="t" style="left:739.8px;top:423.80px;font-size:7.7px;color:#6b6e73;font-weight:400;letter-spacing:-0.15px">£0.00</div>
<div class="r" style="left:152.4px;top:471.2px;width:839.2px;height:1.0px;background:#f1f2f5"></div>
<div class="r" style="left:161.7px;top:479.0px;width:9.0px;height:9.5px;background:#fff;border:1px solid #e9ebef;border-radius:2px"></div>
<div class="r" style="left:197px;top:477.0px;width:61px;height:39.0px;background:#edf0f9;border-radius:5px"></div>
<div class="t" style="left:304.8px;top:479.12px;font-size:8.3px;color:#5573a3;font-weight:400;">Engine Oil</div>
<div class="t" style="left:304.8px;top:491.17px;font-size:7.1px;color:#62666e;font-weight:400;"><span style="color:#4a4f57;-webkit-text-stroke:0.2px #4a4f57">Group:</span> Engine</div>
<div class="t" style="left:681px;top:478.10px;font-size:7.7px;color:#6b6e73;font-weight:400;letter-spacing:-0.15px">£1.00</div>
<div class="t" style="left:739.8px;top:478.10px;font-size:7.7px;color:#6b6e73;font-weight:400;letter-spacing:-0.15px">£0.00</div>
<svg style="left:0;top:0" width="1024" height="505" viewBox="0 0 1024 505"><path d="M465.5 290.2 L233 89" stroke="#dc121b" stroke-width="3" stroke-linecap="round"/><path d="M225 82 L241 86.8 L230.5 96.6 Z" fill="#dc121b" stroke="#dc121b" stroke-width="1" stroke-linejoin="round"/></svg>
</body></html>
